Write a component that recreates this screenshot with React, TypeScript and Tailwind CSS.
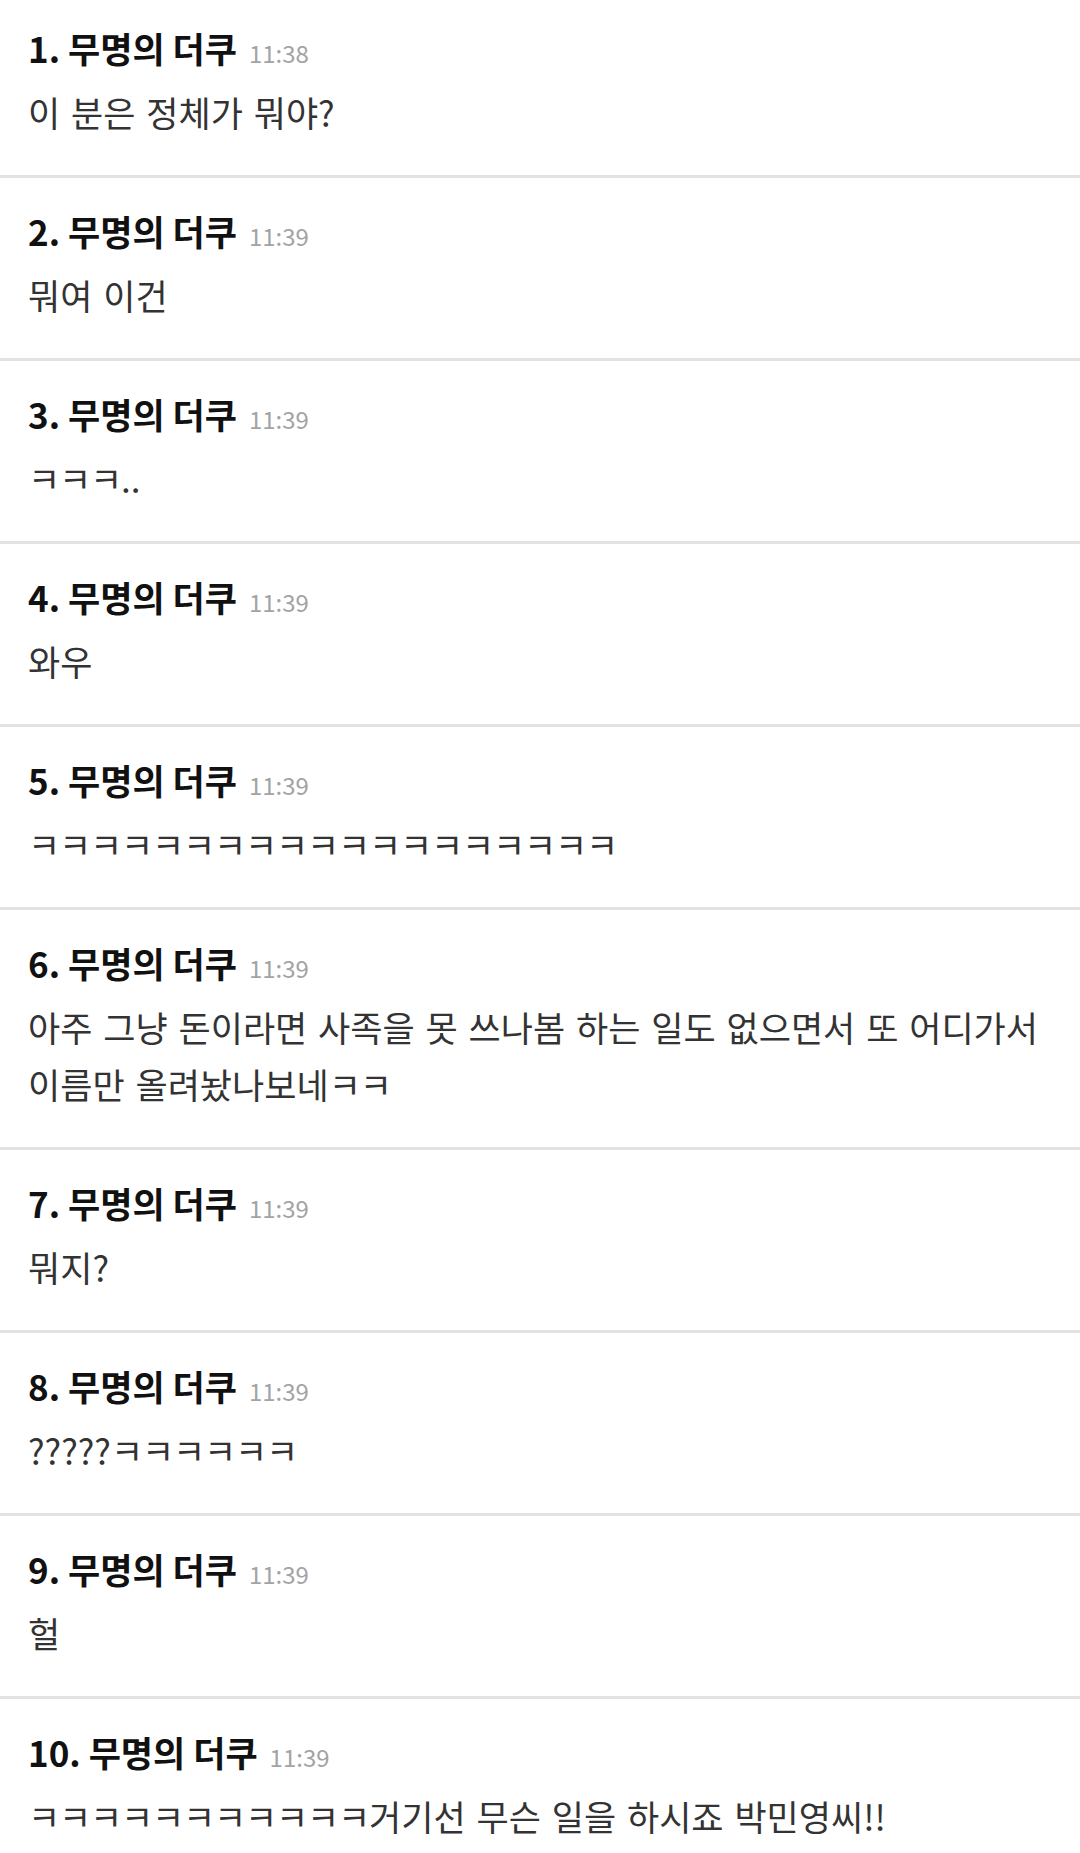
import React from "react";

const items: { n: number; time: string; body: string }[] = [
  { n: 1, time: "11:38", body: "이 분은 정체가 뭐야?" },
  { n: 2, time: "11:39", body: "뭐여 이건" },
  { n: 3, time: "11:39", body: "ㅋㅋㅋ.." },
  { n: 4, time: "11:39", body: "와우" },
  { n: 5, time: "11:39", body: "ㅋㅋㅋㅋㅋㅋㅋㅋㅋㅋㅋㅋㅋㅋㅋㅋㅋㅋㅋ" },
  {
    n: 6,
    time: "11:39",
    body: "아주 그냥 돈이라면 사족을 못 쓰나봄 하는 일도 없으면서 또 어디가서 이름만 올려놨나보네ㅋㅋ",
  },
  { n: 7, time: "11:39", body: "뭐지?" },
  { n: 8, time: "11:39", body: "?????ㅋㅋㅋㅋㅋㅋ" },
  { n: 9, time: "11:39", body: "헐" },
  { n: 10, time: "11:39", body: "ㅋㅋㅋㅋㅋㅋㅋㅋㅋㅋㅋ거기선 무슨 일을 하시죠 박민영씨!!" },
];

function Body({ text }: { text: string }) {
  const parts = text.split(/(ㅋ+)/).filter((p) => p.length > 0);
  return (
    <>
      {parts.map((p, i) =>
        p[0] === "ㅋ" ? (
          <span key={i} className="tracking-[-1.2px]">
            {p}
          </span>
        ) : (
          <React.Fragment key={i}>{p}</React.Fragment>
        )
      )}
    </>
  );
}

export default function App() {
  return (
    <div
      className="w-[1080px] h-[1853px] overflow-hidden bg-white"
      style={{ fontFamily: '"Noto Sans CJK KR", "Noto Sans", sans-serif' }}
    >
      {items.map((it, i) => (
        <div
          key={it.n}
          className={`border-b-[3px] border-[#e2e2e2] pl-[28px] pr-[24px] pb-[35px] ${i === 0 ? "pt-[28px]" : "pt-[33px]"}`}
        >
          <div className="flex items-baseline h-[40px] leading-[40px]">
            <span className="text-[35px] font-bold text-[#111111]">
              {it.n}. 무명의 더쿠
            </span>
            <span className="ml-[12px] text-[24px] text-[#a3a3a3]">{it.time}</span>
          </div>
          <div className="mt-[15px] text-[35px] leading-[57px] text-[#333333] break-keep [word-spacing:3px]">
            <Body text={it.body} />
          </div>
        </div>
      ))}
    </div>
  );
}
